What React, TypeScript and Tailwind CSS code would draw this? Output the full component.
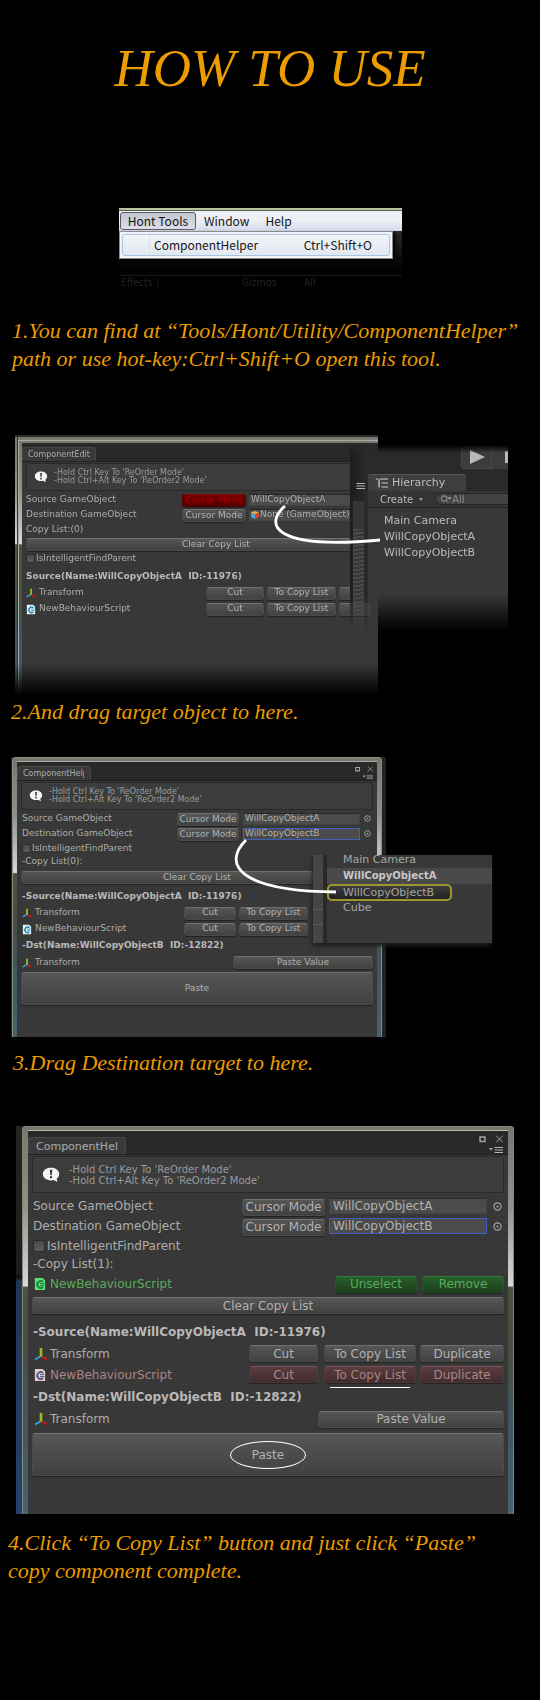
import type { ReactNode } from 'react';

type Size = 'sm' | 'lg';

const rowClass: Record<Size, string> = {
  sm: 'flex h-[15px] shrink-0 items-center',
  lg: 'flex h-5 shrink-0 items-center',
};

const toneClass = {
  plain: 'from-[#565656] to-[#414141] border-t-[#717171] text-[#b2b2b2]',
  red: 'from-[#720000] to-[#540000] border-t-[#850000] text-[#a80000]',
  green: 'from-[#285f2a] to-[#1d3f1e] border-t-[#367a38] text-[#58ab5a]',
  rose: 'from-[#5a3d3f] to-[#412d2f] border-t-[#785557] text-[#aa8486]',
};

const edgeClass = {
  plain: 'border-x-[#4b4b4b] border-b-[#4a4a4a]',
  red: 'border-x-[#600000] border-b-[#5a0000]',
  green: 'border-x-[#27562a] border-b-[#1f4a21]',
  rose: 'border-x-[#553b3d] border-b-[#4c3436]',
};

function Btn({ children, className = '', tone = 'plain' }: { children: ReactNode; className?: string; tone?: keyof typeof toneClass }) {
  return (
    <button
      type="button"
      className={`flex shrink-0 items-center justify-center rounded-[3px] border bg-linear-to-b whitespace-nowrap shadow-[0_1px_1px_#222] ${edgeClass[tone]} ${toneClass[tone]} ${className}`}
    >
      {children}
    </button>
  );
}

function Bubble({ size }: { size: Size }) {
  return (
    <svg viewBox="0 0 20 18" className={size === 'sm' ? 'h-3 w-[14px]' : 'h-4 w-[18px]'} aria-hidden="true">
      <path d="M10 .8c5.300 0 9.200 3 9.200 7.200 0 2.200-1 4-2.800 5.300l.8 3.700-4.200-2.300c-1 .3-2 .4-3 .4C4.700 15.100.8 12.200.8 8S4.700.8 10 .8Z" fill="#f4f4f4" />
      <path d="M8.700 3h2.700l-.6 6.200H9.300Z" fill="#333" />
      <circle cx="10" cy="11.500" r="1.300" fill="#333" />
    </svg>
  );
}

function AxesIcon({ size }: { size: Size }) {
  return (
    <svg viewBox="0 0 14 14" className={size === 'sm' ? 'size-[10px] shrink-0' : 'size-[14px] shrink-0'} aria-hidden="true">
      <path d="M7 9 1 12.500" stroke="#3aa0e0" strokeWidth="2" />
      <path d="m7 9 6 3.500" stroke="#d01818" strokeWidth="2" />
      <path d="M7 9.500V1" stroke="#8cc21c" strokeWidth="2.600" />
    </svg>
  );
}

function ScriptIcon({ size, paper = '#e8f2f6', ink = '#1b86b8' }: { size: Size; paper?: string; ink?: string }) {
  return (
    <svg viewBox="0 0 14 16" className={size === 'sm' ? 'h-[11px] w-[10px] shrink-0' : 'h-[14px] w-3 shrink-0'} aria-hidden="true">
      <path d="M1 1h9l3 3v11H1Z" fill={paper} />
      <path d="M10.500 5.500A4 4 0 1 0 10.500 11.500" fill="none" stroke={ink} strokeWidth="2" />
      <path d="M7 7.500h5M7 9.800h5" stroke={ink} strokeWidth="1.100" />
    </svg>
  );
}

function MenuLines({ arrow = true }: { arrow?: boolean }) {
  return (
    <svg viewBox="0 0 14 6" className="h-[6px] w-[14px]" aria-hidden="true">
      {arrow && <path d="M0 1h4L2 3.500Z" fill="#a5a5a5" />}
      <path d="M5.500 .5H14M5.500 3H14M5.500 5.500H14" stroke="#b5b5b5" />
    </svg>
  );
}

function WindowMarks({ size }: { size: Size }) {
  return (
    <div className={`flex flex-col items-end ${size === 'sm' ? 'gap-[2px] pt-1 pr-1' : 'gap-1 pt-1 pr-[5px]'}`}>
      <svg viewBox="0 0 24 8" className={size === 'sm' ? 'h-[6px] w-[18px]' : 'h-2 w-6'} aria-hidden="true">
        <path d="M1 2h5v4.500H1Z" fill="none" stroke="#a5a5a5" strokeWidth="1.400" />
        <path d="m17 .5 7 7m0-7-7 7" stroke="#a5a5a5" />
      </svg>
      <div className={size === 'sm' ? 'origin-right scale-75' : ''}>
        <MenuLines />
      </div>
    </div>
  );
}

function Header({ title, size, marks = true, clip = false }: { title: string; size: Size; marks?: boolean; clip?: boolean }) {
  return (
    <div className={`flex items-start justify-between border-b border-[#202020] bg-[#292929] ${size === 'sm' ? 'h-[19px]' : 'h-6'}`}>
      <div
        className={`self-end overflow-hidden rounded-t-[3px] border border-b-0 border-[#474747] bg-[#393939] whitespace-nowrap text-[#acacac] ${
          size === 'sm' ? 'h-[14px] w-[74px] pl-[5px] text-[8px] leading-[13px]' : 'h-[17px] w-[98px] pl-[7px] text-[11px] leading-[17px]'
        }`}
      >
        <div className={`overflow-hidden ${clip ? (size === 'sm' ? 'w-[61px]' : 'w-[82px]') : ''}`}>{title}</div>
      </div>
      {marks && <WindowMarks size={size} />}
    </div>
  );
}

function HelpBox({ size }: { size: Size }) {
  return (
    <div
      className={`flex shrink-0 items-center rounded-[3px] border border-[#292929] bg-[#3c3c3c] text-[#9a9a9a] ${
        size === 'sm' ? 'h-7 gap-[6px] pl-[7px] text-[8px] leading-[8px]' : 'h-[37px] gap-[9px] pl-[9px] text-[10px] leading-[11px]'
      }`}
    >
      <Bubble size={size} />
      <p className="whitespace-nowrap">
        -Hold Ctrl Key To &apos;ReOrder Mode&apos;
        <br />
        -Hold Ctrl+Alt Key To &apos;ReOrder2 Mode&apos;
      </p>
    </div>
  );
}

function PickDot({ size }: { size: Size }) {
  return (
    <svg viewBox="0 0 10 10" className={size === 'sm' ? 'mr-[2px] size-[7px]' : 'mr-[2px] size-[9px]'} aria-hidden="true">
      <circle cx="5" cy="5" r="4" fill="none" stroke="#a8a8a8" strokeWidth="1.300" />
      <circle cx="5" cy="5" r="1.200" fill="#a8a8a8" />
    </svg>
  );
}

function ObjectRow({ id, label, value, size, focus = false }: { id: string; label: string; value: string; size: Size; focus?: boolean }) {
  return (
    <div className={rowClass[size]}>
      <label htmlFor={id} className="flex-1 whitespace-nowrap">
        {label}
      </label>
      <Btn className={size === 'sm' ? 'mt-[2px] h-[13px] w-[62px]' : 'mt-[2px] h-[17px] w-[83px]'}>Cursor Mode</Btn>
      <input
        id={id}
        readOnly
        defaultValue={value}
        className={`border bg-[#4b4b4b] text-[#b2b2b2] outline-none ${focus ? 'border-[#3f5fc4]' : 'border-[#444] border-t-[#272727]'} ${
          size === 'sm' ? 'mr-1 ml-1 h-3 w-[117px] px-px' : 'mr-[6px] ml-1 h-4 w-[158px] px-[3px]'
        }`}
      />
      <PickDot size={size} />
    </div>
  );
}

function CheckRow({ id, size }: { id: string; size: Size }) {
  return (
    <div className={rowClass[size]}>
      <input
        id={id}
        type="checkbox"
        className={`appearance-none rounded-[2px] border border-[#2b2b2b] bg-linear-to-b from-[#4a4a4a] to-[#5c5c5c] ${size === 'sm' ? 'mr-px size-[9px]' : 'mr-[2px] size-3'}`}
      />
      <label htmlFor={id}>IsIntelligentFindParent</label>
    </div>
  );
}

function Caption({ children, className = '' }: { children: ReactNode; className?: string }) {
  return <p className={`font-['Liberation_Serif',serif] text-[22px] leading-7 text-[#eb9c00] italic ${className}`}>{children}</p>;
}

function MenuShot() {
  return (
    <div className="mt-[110px] mr-[138px] ml-[119px] flex h-20 flex-col bg-linear-to-b from-[#2a2a2a] from-30% to-black font-['Noto_Sans_CJK_SC','Noto_Sans_CJK_JP',sans-serif] text-[12px] text-[#151515]">
      <div className="h-[3px] shrink-0 border-b border-[#56634c] bg-[#b5c49d]" />
      <nav className="flex h-[20px] shrink-0 items-center bg-linear-to-b from-[#eef0f5] from-45% to-[#d3d9ec] pl-px">
        <button type="button" className="h-[18px] w-[76px] rounded-[3px] border border-[#5a5a66] bg-linear-to-b from-[#c3c5d1] to-[#dcdde8] leading-[14px]">
          Hont Tools
        </button>
        <button type="button" className="ml-2 leading-4">Window</button>
        <button type="button" className="ml-4 leading-4">Help</button>
      </nav>
      <div className="mr-[9px] h-[28px] shrink-0 border border-[#8c8c8c] bg-[#f1f3f6] p-[2px] shadow-[2px_2px_3px_#000]">
        <button type="button" className="flex h-full w-full items-center justify-between rounded-[3px] border border-[#a9c6e6] bg-linear-to-b from-[#f2f5f9] to-[#e1e8f0] pr-[17px]">
          <span className="ml-[26px] border-l border-[#dde1e6] pl-1 leading-5">ComponentHelper</span>
          <span>Ctrl+Shift+O</span>
        </button>
      </div>
      <div className="mt-4 flex border-t border-[#181818] pl-[2px] text-[10px] leading-3 text-[#232323]">
        <span className="w-[121px]">Effects &nbsp;|</span>
        <span className="w-[62px]">Gizmos</span>
        <span>All</span>
      </div>
    </div>
  );
}

const frameGlow =
  'bg-[linear-gradient(to_bottom,#75786e_0%,#8f9189_20%,#d8d8d6_41%,#4d5140_41.5%,#485044_60%,#3f5663_75%,#466170_100%)]';

function Hierarchy() {
  return (
    <div className="absolute top-[10px] left-[335px] flex h-[186px] w-[158px] [mask-image:linear-gradient(to_bottom,transparent_0,black_8px,black_80%,transparent_100%)] text-[11px] text-[#bcbcbc]">
      <div className="flex w-4 flex-col items-center bg-linear-to-r from-[#1d1d1d] to-[#292929] pt-[38px] shadow-[-3px_0_4px_#1a1a1a]">
        <MenuLines arrow={false} />
        <div className="mt-3 h-7 w-[11px] bg-[#353535]" />
        <div className="w-[11px] flex-1 bg-[repeating-linear-gradient(172deg,#4a4a4a_0,#4a4a4a_2px,#383838_2px,#383838_4px)]" />
      </div>
      <div className="flex flex-1 flex-col overflow-hidden bg-[#2a2a2a]">
        <div className="flex h-6 shrink-0 justify-end">
          <button type="button" aria-label="Play" className="flex w-[31px] items-center justify-center rounded-l-[3px] border border-[#4a4a4a] bg-[#3c3c3c]">
            <svg viewBox="0 0 16 14" className="h-[14px] w-4" aria-hidden="true">
              <path d="M1 0v14l15-7Z" fill="#b9b9b9" />
            </svg>
          </button>
          <button type="button" aria-label="Pause" className="flex w-4 items-center justify-end bg-[#3c3c3c]">
            <span className="h-3 w-[3px] bg-[#b9b9b9]" />
          </button>
        </div>
        <div className="mt-[5px] ml-[2px] flex h-[17px] w-[98px] shrink-0 items-center gap-1 rounded-t-[3px] border-t border-[#555] bg-[#3f3f3f] pl-2 text-[11px]">
          <svg viewBox="0 0 12 10" className="h-[10px] w-3" aria-hidden="true">
            <path d="M0 1h2M4 1h8M3 5h1M5.500 5H12M3 9h1M5.500 9H12M3 1v8" stroke="#d0d0d0" strokeWidth="1.200" />
          </svg>
          Hierarchy
        </div>
        <div className="ml-[2px] flex h-[17px] shrink-0 items-center border-b border-[#222] bg-[#343434] pl-3 text-[10px]">
          Create
          <svg viewBox="0 0 4 3" className="ml-[6px] h-[3px] w-1" aria-hidden="true">
            <path d="M0 0h4L2 3Z" fill="#999" />
          </svg>
          <span className="ml-3 flex h-3 flex-1 items-center rounded-l-full border border-r-0 border-[#262626] bg-[#414141] pl-1 text-[#8d8d8d]">
            <svg viewBox="0 0 12 10" className="h-[9px] w-3" aria-hidden="true">
              <circle cx="4" cy="4" r="3" fill="none" stroke="#8d8d8d" strokeWidth="1.300" />
              <path d="m6 6 3 3M8 3h4l-2 2Z" fill="#8d8d8d" stroke="#8d8d8d" />
            </svg>
            All
          </span>
        </div>
        <ul className="ml-[2px] flex-1 bg-[#383838] pt-[5px] pl-4 leading-4 whitespace-nowrap">
          <li>Main Camera</li>
          <li>WillCopyObjectA</li>
          <li>WillCopyObjectB</li>
        </ul>
      </div>
    </div>
  );
}

function StepTwoShot() {
  return (
    <div className="relative mt-[62px] ml-[15px] h-[262px] font-['DejaVu_Sans',sans-serif] text-[9px] text-[#adadad]">
      <div className={`flex h-full max-w-[363px] border-t-2 border-[#2a2a2a] [mask-image:linear-gradient(to_bottom,black_87%,transparent_99%)] ${frameGlow}`}>
        <div className="w-[3px] border-r border-[#33352f]" />
        <div className="mt-[3px] flex min-w-0 flex-1 flex-col border-t border-l border-[#a9aba0] pt-[2px] pl-[2px]">
          <div className="ml-px flex flex-1 flex-col bg-[#383838]">
            <Header title="ComponentEdit" size="sm" marks={false} />
            <div className="flex flex-col pt-px pl-[4px]">
              <HelpBox size="sm" />
              <div className={`${rowClass.sm} mt-px`}>
                <label htmlFor="s2-src" className="w-[156px]">Source GameObject</label>
                <Btn tone="red" className="mt-[2px] h-[13px] w-16">Cursor Mode</Btn>
                <input id="s2-src" readOnly defaultValue="WillCopyObjectA" className="ml-[3px] h-3 w-[106px] border border-[#444] border-t-[#272727] bg-[#4b4b4b] px-px outline-none" />
              </div>
              <div className={rowClass.sm}>
                <label htmlFor="s2-dst" className="w-[156px]">Destination GameObject</label>
                <Btn className="mt-[2px] h-[13px] w-16">Cursor Mode</Btn>
                <div className="ml-[3px] flex h-3 w-[106px] items-center border border-[#444] border-t-[#272727] bg-[#4b4b4b] pl-px">
                  <svg viewBox="0 0 8 8" className="mr-px size-2 shrink-0" aria-hidden="true">
                    <path d="m4 0 4 1.500L4 3.500 0 1.500Z" fill="#e8b23c" />
                    <path d="M0 1.500 4 3.500V8L0 6Z" fill="#4ba3d8" />
                    <path d="M8 1.500 4 3.500V8l4-2Z" fill="#d9472b" />
                  </svg>
                  <input id="s2-dst" readOnly defaultValue="None (GameObject)" className="min-w-0 flex-1 bg-transparent outline-none" />
                </div>
              </div>
              <div className={rowClass.sm}>Copy List:(0)</div>
              <Btn className="mt-px mr-[-40px] h-[13px] pr-[12px]">Clear Copy List</Btn>
              <CheckRow id="s2-find" size="sm" />
              <h2 className="mt-[2px] flex h-[17px] items-center font-bold whitespace-pre text-[#b9b9b9]">{'Source(Name:WillCopyObjectA  ID:-11976)'}</h2>
              {['Transform', 'NewBehaviourScript'].map((name) => (
                <div key={name} className="flex h-4 items-center gap-[3px]">
                  {name === 'Transform' ? <AxesIcon size="sm" /> : <ScriptIcon size="sm" />}
                  <span className="w-[164px]">{name}</span>
                  <Btn className="h-[13px] w-[58px]">Cut</Btn>
                  <Btn className="h-[13px] w-[69px]">To Copy List</Btn>
                  <Btn className="h-[13px] w-8">{''}</Btn>
                </div>
              ))}
            </div>
          </div>
        </div>
      </div>
      <Hierarchy />
      <svg viewBox="0 0 380 130" className="absolute top-0 left-0 h-[130px] w-[380px]" aria-hidden="true">
        <path d="M270 71C249 89 257 115 365 105" fill="none" stroke="#fff" strokeWidth="2.800" />
      </svg>
    </div>
  );
}

function PickList() {
  return (
    <div className="absolute top-[98px] left-[302px] flex h-[88px] w-[179px] bg-[#383838] text-[11px] text-[#a5a5a5] shadow-[-1px_3px_4px_#1d1d1d]">
      <div className="w-[10px] bg-[#464646] pt-[54px]">
        <div className="h-4 border-y border-[#5c5c5c]" />
      </div>
      <div className="w-1 bg-[#292929]" />
      <ul className="flex-1 leading-4 whitespace-nowrap">
        <li className="-mt-[3px] h-4 pl-4">Main Camera</li>
        <li className="h-4 bg-[#494949] pl-4 text-[10px] font-bold text-[#c8c8c8]">WillCopyObjectA</li>
        <li className="h-4 pl-4">
          <span className="-ml-4 block h-[17px] w-[125px] rounded-[5px] border-2 border-[#9d962d] bg-linear-to-b from-[#3d3d3d] to-[#222] pl-[14px] leading-[13px]">WillCopyObjectB</span>
        </li>
        <li className="h-4 pl-4">Cube</li>
      </ul>
    </div>
  );
}

function StepThreeShot() {
  return (
    <div className="relative mt-[31px] ml-[11px] font-['DejaVu_Sans',sans-serif] text-[9px] text-[#adadad]">
      <div className="max-w-[375px] bg-[#222] pr-[4px] pl-px">
        <div className={`h-[280px] rounded-t-[4px] border-x border-t border-[#8a8c82] px-[4px] pt-[3px] ${frameGlow}`}>
          <div className="flex h-full flex-col border-t border-[#a9aba0] bg-[#383838]">
            <Header title="ComponentHelper" size="sm" clip />
            <div className="flex flex-1 flex-col px-1 pt-px">
              <HelpBox size="sm" />
              <div className="mt-px pl-px">
                <ObjectRow id="s3-src" label="Source GameObject" value="WillCopyObjectA" size="sm" />
                <ObjectRow id="s3-dst" label="Destination GameObject" value="WillCopyObjectB" size="sm" focus />
                <CheckRow id="s3-find" size="sm" />
              </div>
              <div className="flex h-3 items-center pl-px">-Copy List(0):</div>
              <Btn className="mt-[3px] h-[13px]">Clear Copy List</Btn>
              <h2 className="mt-[5px] flex h-4 items-center pl-px font-bold whitespace-pre text-[#b9b9b9]">{'-Source(Name:WillCopyObjectA  ID:-11976)'}</h2>
              {['Transform', 'NewBehaviourScript'].map((name) => (
                <div key={name} className="flex h-4 items-center gap-[3px] pl-px">
                  {name === 'Transform' ? <AxesIcon size="sm" /> : <ScriptIcon size="sm" />}
                  <span className="w-[146px]">{name}</span>
                  <Btn className="h-[13px] w-[52px]">Cut</Btn>
                  <Btn className="h-[13px] w-[69px]">To Copy List</Btn>
                </div>
              ))}
              <h2 className="mt-px flex h-4 items-center pl-px font-bold whitespace-pre text-[#b9b9b9]">{'-Dst(Name:WillCopyObjectB  ID:-12822)'}</h2>
              <div className="flex h-[17px] items-center gap-[3px] pl-px">
                <AxesIcon size="sm" />
                <span className="flex-1">Transform</span>
                <Btn className="h-[13px] w-[140px]">Paste Value</Btn>
              </div>
              <Btn className="mt-px h-[33px]">Paste</Btn>
            </div>
          </div>
        </div>
      </div>
      <PickList />
      <svg viewBox="0 0 340 150" className="absolute top-0 left-0 h-[150px] w-[340px]" aria-hidden="true">
        <path d="M235 83C211 107 227 134 325 135" fill="none" stroke="#fff" strokeWidth="2.800" />
      </svg>
    </div>
  );
}

function StepFourShot() {
  return (
    <div className="mt-[49px] mr-[26px] ml-4 flex h-[388px] bg-[linear-gradient(to_bottom,#252525_0,#1c1c1c_38%,#111_39%,#223659_40%,#27406c_100%)] pl-[6px] font-['DejaVu_Sans',sans-serif] text-[12px] text-[#adadad]">
      <div className={`flex-1 rounded-t-[4px] border-x border-t border-[#83877a] px-[5px] pt-[3px] ${frameGlow}`}>
        <div className="flex h-full flex-col border-t border-[#b5bda8] bg-[#383838]">
          <Header title="ComponentHelper" size="lg" clip />
          <div className="flex flex-1 flex-col px-1 pt-px">
            <HelpBox size="lg" />
            <div className="mt-[3px] pl-px">
              <ObjectRow id="s4-src" label="Source GameObject" value="WillCopyObjectA" size="lg" />
              <ObjectRow id="s4-dst" label="Destination GameObject" value="WillCopyObjectB" size="lg" focus />
              <CheckRow id="s4-find" size="lg" />
            </div>
            <div className="flex h-4 items-center pl-px">-Copy List(1):</div>
            <div className="flex h-6 items-center">
              <span className="ml-[2px]">
                <ScriptIcon size="lg" paper="#5ee070" ink="#117a3d" />
              </span>
              <span className="ml-1 flex-1 text-[#58ab5a]">NewBehaviourScript</span>
              <Btn tone="green" className="h-[17px] w-[82px]">Unselect</Btn>
              <Btn tone="green" className="ml-[5px] h-[17px] w-[82px]">Remove</Btn>
            </div>
            <Btn className="mt-px h-[17px]">Clear Copy List</Btn>
            <h2 className="mt-2 flex h-5 items-center pl-px font-bold whitespace-pre text-[#b9b9b9]">{'-Source(Name:WillCopyObjectA  ID:-11976)'}</h2>
            <div className="mt-px flex h-[21px] items-center">
              <span className="ml-[2px] w-4"><AxesIcon size="lg" /></span>
              <span className="flex-1">Transform</span>
              <Btn className="h-[17px] w-[69px]">Cut</Btn>
              <Btn className="ml-[6px] h-[17px] w-[92px]">To Copy List</Btn>
              <Btn className="ml-[4px] h-[17px] w-[84px]">Duplicate</Btn>
            </div>
            <div className="flex h-[21px] items-center text-[#aa8486]">
              <span className="ml-[2px] w-4"><ScriptIcon size="lg" paper="#ecc8cc" ink="#385a80" /></span>
              <span className="flex-1">NewBehaviourScript</span>
              <Btn tone="rose" className="h-[17px] w-[69px]">Cut</Btn>
              <div className="relative ml-[6px]">
                <Btn tone="rose" className="h-[17px] w-[92px]">To Copy List</Btn>
                <span className="absolute -bottom-[5px] left-[6px] h-px w-20 bg-white" />
              </div>
              <Btn tone="rose" className="ml-[4px] h-[17px] w-[84px]">Duplicate</Btn>
            </div>
            <h2 className="mt-[2px] flex h-5 items-center pl-px font-bold whitespace-pre text-[#b9b9b9]">{'-Dst(Name:WillCopyObjectB  ID:-12822)'}</h2>
            <div className="mt-px flex h-[22px] items-center">
              <span className="ml-[2px] w-4"><AxesIcon size="lg" /></span>
              <span className="flex-1">Transform</span>
              <Btn className="h-[17px] w-[186px]">Paste Value</Btn>
            </div>
            <Btn className="mt-[3px] h-[43px]">
              <span className="flex h-7 w-[76px] items-center justify-center rounded-[50%] border border-white">Paste</span>
            </Btn>
          </div>
        </div>
      </div>
    </div>
  );
}

export default function App() {
  return (
    <main className="min-h-screen overflow-hidden bg-black pb-[110px]">
      <h1 className="pt-[38px] text-center font-['Liberation_Serif',serif] text-[53px] leading-[60px] text-[#eb9c00] italic">HOW TO USE</h1>
      <MenuShot />
      <Caption className="mt-[29px] ml-3">
        1.You can find at “Tools/Hont/Utility/ComponentHelper”
        <br />
        path or use hot-key:Ctrl+Shift+O open this tool.
      </Caption>
      <StepTwoShot />
      <Caption className="mt-px ml-[11px]">2.And drag target object to here.</Caption>
      <StepThreeShot />
      <Caption className="mt-3 ml-[13px]">3.Drag Destination target to here.</Caption>
      <StepFourShot />
      <Caption className="mt-[15px] ml-2">
        4.Click “To Copy List” button and just click “Paste”
        <br />
        copy component complete.
      </Caption>
    </main>
  );
}
